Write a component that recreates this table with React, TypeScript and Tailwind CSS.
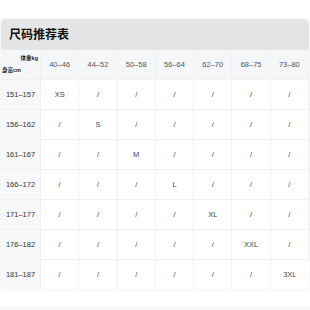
const weights = ["40–46", "44–52", "50–58", "56–64", "62–70", "68–75", "73–80"];
const heights = ["151–157", "156–162", "161–167", "166–172", "171–177", "176–182", "181–187"];
const sizes = ["XS", "S", "M", "L", "XL", "XXL", "3XL"];

const font = { fontFamily: '"Liberation Sans", Arial, "Noto Sans CJK SC", sans-serif' };

export default function App() {
  return (
    <div className="h-[310px] w-[310px] overflow-hidden bg-white pt-[19px]" style={font}>
      <div className="ml-[1px] w-[308px] overflow-hidden rounded-[5px] bg-white shadow-[0_0_2px_rgba(0,0,0,0.12)]">
        <div className="flex h-[31px] items-center bg-[#e4e5e7] px-[8px] text-[12px] font-bold text-[#111]">
          尺码推荐表
        </div>
        <div className="grid grid-cols-[40px_repeat(7,1fr)]">
          {/* header */}
          <div className="relative h-[30px] border-r border-b border-[#eef0f2] bg-[#f5f6f8]">
            <svg className="absolute inset-0" width="40" height="30">
              <line x1="0" y1="0" x2="40" y2="30" stroke="#eceef0" strokeWidth="1" />
            </svg>
            <span className="absolute top-[4px] right-[2px] text-[5.5px] font-bold text-[#222]">体重kg</span>
            <span className="absolute bottom-[5px] left-[1px] text-[5.5px] font-bold text-[#222]">身高cm</span>
          </div>
          {weights.map((w) => (
            <div
              key={w}
              className="flex h-[30px] items-center justify-center border-r border-b border-[#eef0f2] bg-[#f5f6f8] text-[7.5px] text-[#555] last:border-r-0"
            >
              {w}
            </div>
          ))}
          {heights.map((h, r) => (
            <Row key={h} label={h} size={sizes[r]} idx={r} last={r === heights.length - 1} />
          ))}
        </div>
      </div>
      <div className="mt-[16px] h-[20px] w-[310px] bg-[#f8f8f9]" />
    </div>
  );
}

function Row({ label, size, idx, last }: { label: string; size: string; idx: number; last: boolean }) {
  const b = last ? "" : "border-b";
  return (
    <>
      <div
        className={`flex h-[30px] items-center justify-center border-r border-[#eef0f2] bg-[#f7f8fa] text-[7.5px] text-[#333] ${b}`}
      >
        {label}
      </div>
      {weights.map((w, c) => (
        <div
          key={w}
          className={`flex h-[30px] items-center justify-center border-r border-[#f0f1f3] text-[7.5px] text-[#444] last:border-r-0 ${b}`}
        >
          {c === idx ? size : "/"}
        </div>
      ))}
    </>
  );
}
